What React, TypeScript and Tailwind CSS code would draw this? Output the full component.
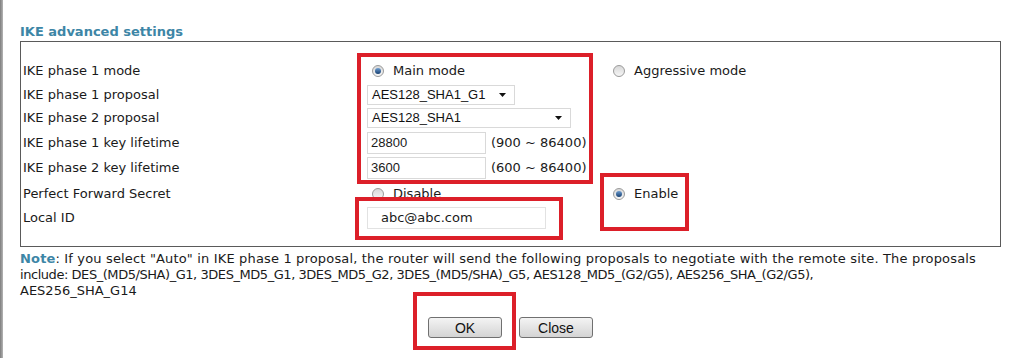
import React from 'react';

const verdana = "font-['DejaVu_Sans',Verdana,sans-serif]";
const arial = "font-['Liberation_Sans',Arial,sans-serif]";

function Radio({ checked }: { checked?: boolean }) {
  return (
    <span className="flex h-[12px] w-[12px] shrink-0 items-center justify-center rounded-full border border-[#9a9a9a] bg-gradient-to-b from-[#d8d8d8] to-[#f6f6f6]">
      {checked && <span className="h-[6px] w-[6px] rounded-full bg-gradient-to-b from-[#6f9fd2] to-[#163f70]" />}
    </span>
  );
}

function Select({ value, width }: { value: string; width: string }) {
  return (
    <div className={`flex h-[20px] items-center justify-between border border-[#d9d9d9] bg-white pl-[4px] pr-[8px] text-[13px] text-[#111] ${arial} ${width}`}>
      <span>{value}</span>
      <svg width="7" height="4" viewBox="0 0 7 4"><path d="M0 0h7L3.5 4z" fill="#111" /></svg>
    </div>
  );
}

function Row({ label, h, children }: { label: string; h: string; children?: React.ReactNode }) {
  return (
    <div className={`flex items-center ${h}`}>
      <div className="w-[344px] shrink-0">{label}</div>
      {children}
    </div>
  );
}

export default function App() {
  const mark = 'absolute border-[4px] border-[#dc1f29] pointer-events-none';
  return (
    <div className={`relative flex h-[358px] w-[1018px] overflow-hidden bg-white text-[13px] text-[#1a1a1a] ${verdana}`}>
      <div className="w-[3px] shrink-0 bg-gradient-to-r from-[#7d7d7d] to-[#b5b5b5]" />
      <div className="flex w-[981px] flex-col pl-[17px] pt-[24px] box-content">
        <div className="h-[16px] text-[13px] font-bold leading-[16px] text-[#3d86a6]">IKE advanced settings</div>
        <div className="mt-px flex flex-col border border-[#5a5a5a] pb-[16px] pl-[2px] pt-[17px] leading-[16px]">
          <Row label="IKE phase 1 mode" h="h-[24px]">
            <div className="flex w-[246px] items-center pl-[5px]">
              <Radio checked />
              <span className="ml-[9px]">Main mode</span>
            </div>
            <div className="flex items-center">
              <Radio />
              <span className="ml-[9px]">Aggressive mode</span>
            </div>
          </Row>
          <Row label="IKE phase 1 proposal" h="h-[23px]">
            <Select value="AES128_SHA1_G1" width="w-[148px]" />
          </Row>
          <Row label="IKE phase 2 proposal" h="h-[24px]">
            <Select value="AES128_SHA1" width="w-[204px]" />
          </Row>
          <Row label="IKE phase 1 key lifetime" h="h-[25px]">
            <div className={`flex h-[22px] w-[119px] items-center border border-[#d9d9d9] pl-[3px] text-[13px] ${arial}`}>28800</div>
            <span className="ml-[5px]">(900 ~ 86400)</span>
          </Row>
          <Row label="IKE phase 2 key lifetime" h="h-[26px]">
            <div className={`flex h-[22px] w-[119px] items-center border border-[#d9d9d9] pl-[3px] text-[13px] ${arial}`}>3600</div>
            <span className="ml-[5px]">(600 ~ 86400)</span>
          </Row>
          <Row label="Perfect Forward Secret" h="h-[25px]">
            <div className="flex w-[246px] items-center pl-[5px]">
              <Radio />
              <span className="ml-[9px]">Disable</span>
            </div>
            <div className="flex items-center">
              <Radio checked />
              <span className="ml-[9px]">Enable</span>
            </div>
          </Row>
          <Row label="Local ID" h="h-[24px]">
            <div className="flex h-[22px] w-[179px] items-center border border-[#e2e2e2] pl-[13px]">abc@abc.com</div>
          </Row>
        </div>
        <div className="mt-[4px] leading-[16px]">
          <div className="whitespace-nowrap tracking-[0.16px]">
            <span className="font-bold text-[#3d86a6]">Note</span>: If you select "Auto" in IKE phase 1 proposal, the router will send the following proposals to negotiate with the remote site. The proposals
          </div>
          <div className="whitespace-nowrap tracking-[-0.45px]">include: DES_(MD5/SHA)_G1, 3DES_MD5_G1, 3DES_MD5_G2, 3DES_(MD5/SHA)_G5, AES128_MD5_(G2/G5), AES256_SHA_(G2/G5),</div>
          <div className="whitespace-nowrap">AES256_SHA_G14</div>
        </div>
        <div className={`mt-[18px] flex justify-center gap-[17px] text-[14px] ${arial}`}>
          <button className="h-[21px] w-[74px] rounded-[3px] border border-[#707070] bg-gradient-to-b from-[#f4f4f4] to-[#d4d4d4] text-[#111]">OK</button>
          <button className="h-[21px] w-[74px] rounded-[3px] border border-[#707070] bg-gradient-to-b from-[#f4f4f4] to-[#d4d4d4] text-[#111]">Close</button>
        </div>
      </div>
      <div className={`${mark} left-[357px] top-[53px] h-[131px] w-[236px]`} />
      <div className={`${mark} left-[600px] top-[173px] h-[58px] w-[89px]`} />
      <div className={`${mark} left-[355px] top-[197px] h-[43px] w-[208px]`} />
      <div className={`${mark} left-[413px] top-[292px] h-[58px] w-[103px]`} />
    </div>
  );
}
